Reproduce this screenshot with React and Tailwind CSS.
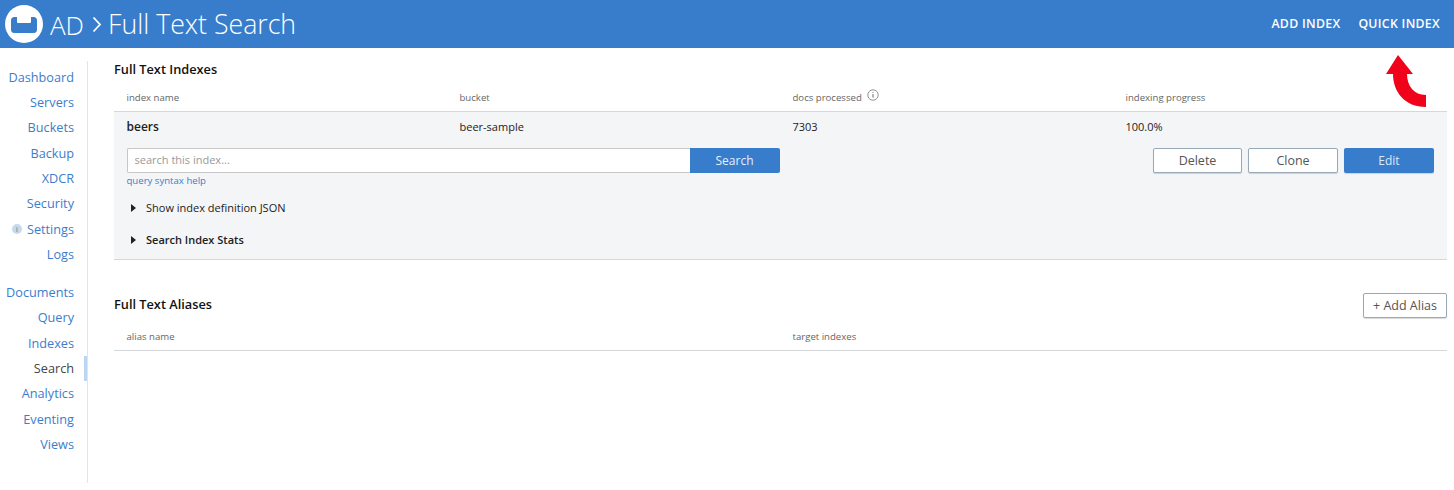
import React from 'react';

const font = { fontFamily: '"Open Sans", sans-serif' };

const topNav = ['Dashboard', 'Servers', 'Buckets', 'Backup', 'XDCR', 'Security', 'Settings', 'Logs'];
const dataNav = ['Documents', 'Query', 'Indexes', 'Search', 'Analytics', 'Eventing', 'Views'];

function NavItem({ label }) {
  const active = label === 'Search';
  return (
    <div className={`relative flex h-[25.35px] items-center justify-end gap-[5px] pr-[13px] text-[12.7px] ${active ? 'text-[#444444]' : 'text-[#3b7dcc]'}`}>
      {label === 'Settings' && (
        <span className="flex h-[10px] w-[10px] items-center justify-center rounded-full bg-[#c5d9ee] text-[7px] leading-none text-[#666666]">i</span>
      )}
      {label}
      {active && <span className="absolute right-0 top-0 h-full w-[3px] bg-[#bcd5f0]" />}
    </div>
  );
}

function Logo() {
  return (
    <svg width="38" height="38" viewBox="0 0 38 38" className="shrink-0">
      <circle cx="19" cy="19" r="19" fill="#fff" />
      <path
        fill="#387ccc"
        d="M9.5 12 Q6 12 6 15.5 V24.5 Q6 28 9.5 28 H28.5 Q32 28 32 24.5 V15.5 Q32 12 28.5 12 H26 V17 Q26 18 25 18 H13 Q12 18 12 17 V12 Z"
      />
    </svg>
  );
}

function OutlineButton({ children, className }) {
  return (
    <button className={`h-[25px] rounded-[2px] border border-[#9aa9b8] bg-white pt-[1px] text-[12.5px] text-[#555555] shadow-[0_1px_1px_rgba(0,0,0,0.15)] ${className}`}>
      {children}
    </button>
  );
}

function Caret() {
  return (
    <svg width="7" height="10" viewBox="0 0 7 10" className="shrink-0">
      <path d="M1 1 L6 5 L1 9 Z" fill="#222222" />
    </svg>
  );
}

export default function App() {
  return (
    <div style={font} className="relative h-[490px] w-[1454px] overflow-hidden bg-white">
      <header className="flex h-12 items-center justify-between bg-[#387ccc] pl-[5px] pr-[14px] text-white">
        <div className="flex items-center">
          <Logo />
          <span className="ml-[7px] mt-[1px] text-[26px] font-light leading-none">AD</span>
          <svg width="10" height="17" viewBox="0 0 10 17" className="ml-[8px] mr-[6px]">
            <path d="M1.5 1.5 L8 8.5 L1.5 15.5" fill="none" stroke="#fff" strokeWidth="1.8" />
          </svg>
          <h1 className="mt-[1px] text-[26.7px] font-light leading-none">Full Text Search</h1>
        </div>
        <div className="flex gap-[18px] text-[12.3px] font-semibold tracking-[0.3px]">
          <span>ADD INDEX</span>
          <span>QUICK INDEX</span>
        </div>
      </header>

      <div className="flex pr-[7px] pt-[13px]">
        <nav className="h-[422px] w-[88px] shrink-0 border-r border-[#e4e4e4] pt-[3.6px]">
          {topNav.map((n) => <NavItem key={n} label={n} />)}
          <div className="h-[12.6px]" />
          {dataNav.map((n) => <NavItem key={n} label={n} />)}
        </nav>

        <main className="ml-[26px] flex-1">
          <h2 className="text-[12.75px] font-semibold leading-[16px] text-[#111111]">Full Text Indexes</h2>
          <div className="mt-[13px] grid h-[22px] grid-cols-[333px_333px_333px_1fr] border-b border-[#d5d7da] pl-[12.5px] pt-[1px] text-[9.6px] leading-[14px] text-[#666666]">
            <span>index name</span>
            <span>bucket</span>
            <span className="flex items-start gap-[5px]">
              docs processed
              <svg width="12" height="12" viewBox="0 0 12 12" className="-mt-[2px] shrink-0">
                <circle cx="6" cy="6" r="5.2" fill="none" stroke="#777777" strokeWidth="0.8" />
                <path d="M6 3 V3.8 M6 5 V8.6" stroke="#666666" strokeWidth="1" />
              </svg>
            </span>
            <span>indexing progress</span>
          </div>

          <div className="h-[148px] border-b border-[#d5d7da] bg-[#f4f5f7] pl-[12.5px] pr-[13px]">
            <div className="grid h-[30px] grid-cols-[333px_333px_333px_1fr] items-center text-[11px] text-[#222222]">
              <span className="text-[12px] font-semibold">beers</span>
              <span>beer-sample</span>
              <span>7303</span>
              <span>100.0%</span>
            </div>
            <div className="mt-[6px] flex items-start justify-between">
              <div>
                <div className="flex h-[25px] w-[653px]">
                  <input
                    readOnly
                    placeholder="search this index..."
                    className="min-w-0 flex-1 rounded-l-[2px] border border-r-0 border-[#c8c8c8] bg-white px-[7px] text-[11px] text-[#444444] placeholder:text-[#999999]"
                  />
                  <button className="w-[90px] rounded-r-[2px] bg-[#387ccc] text-[12px] text-[#e6eff9]">Search</button>
                </div>
                <a className="mt-[1px] block text-[9.6px] leading-[13px] text-[#3b7dcc]">query syntax help</a>
              </div>
              <div className="flex gap-[6px]">
                <OutlineButton className="w-[89px]">Delete</OutlineButton>
                <OutlineButton className="w-[90px]">Clone</OutlineButton>
                <button className="h-[25px] w-[90px] rounded-[2px] bg-[#387ccc] text-[12px] text-[#dce9f7] shadow-[0_1px_1px_rgba(0,0,0,0.15)]">Edit</button>
              </div>
            </div>
            <div className="mt-[13px] flex h-[16px] items-center gap-[9px] pl-[3.5px] text-[11px] text-[#222222]">
              <Caret />
              Show index definition JSON
            </div>
            <div className="mt-[16px] flex h-[16px] items-center gap-[9px] pl-[3.5px] text-[11px] font-semibold text-[#222222]">
              <Caret />
              Search Index Stats
            </div>
          </div>

          <div className="mt-[33px] flex h-[25px] items-start justify-between">
            <h2 className="pt-[3px] text-[12.75px] font-semibold leading-[16px] text-[#111111]">Full Text Aliases</h2>
            <OutlineButton className="w-[84px]">+ Add Alias</OutlineButton>
          </div>
          <div className="mt-[12px] grid h-[21px] grid-cols-[666px_1fr] border-b border-[#d5d7da] pl-[12.5px] text-[9.6px] leading-[14px] text-[#666666]">
            <span>alias name</span>
            <span>target indexes</span>
          </div>
        </main>
      </div>

      <svg width="42" height="54" viewBox="0 0 42 54" className="absolute left-[1385px] top-[54px]">
        <path
          d="M13 1 L28 20 L22 20 C22 32 29 41 41 41 L41 53 C20 53 8 38 8 20 L1 20 Z"
          fill="#f0021b"
        />
      </svg>
    </div>
  );
}
